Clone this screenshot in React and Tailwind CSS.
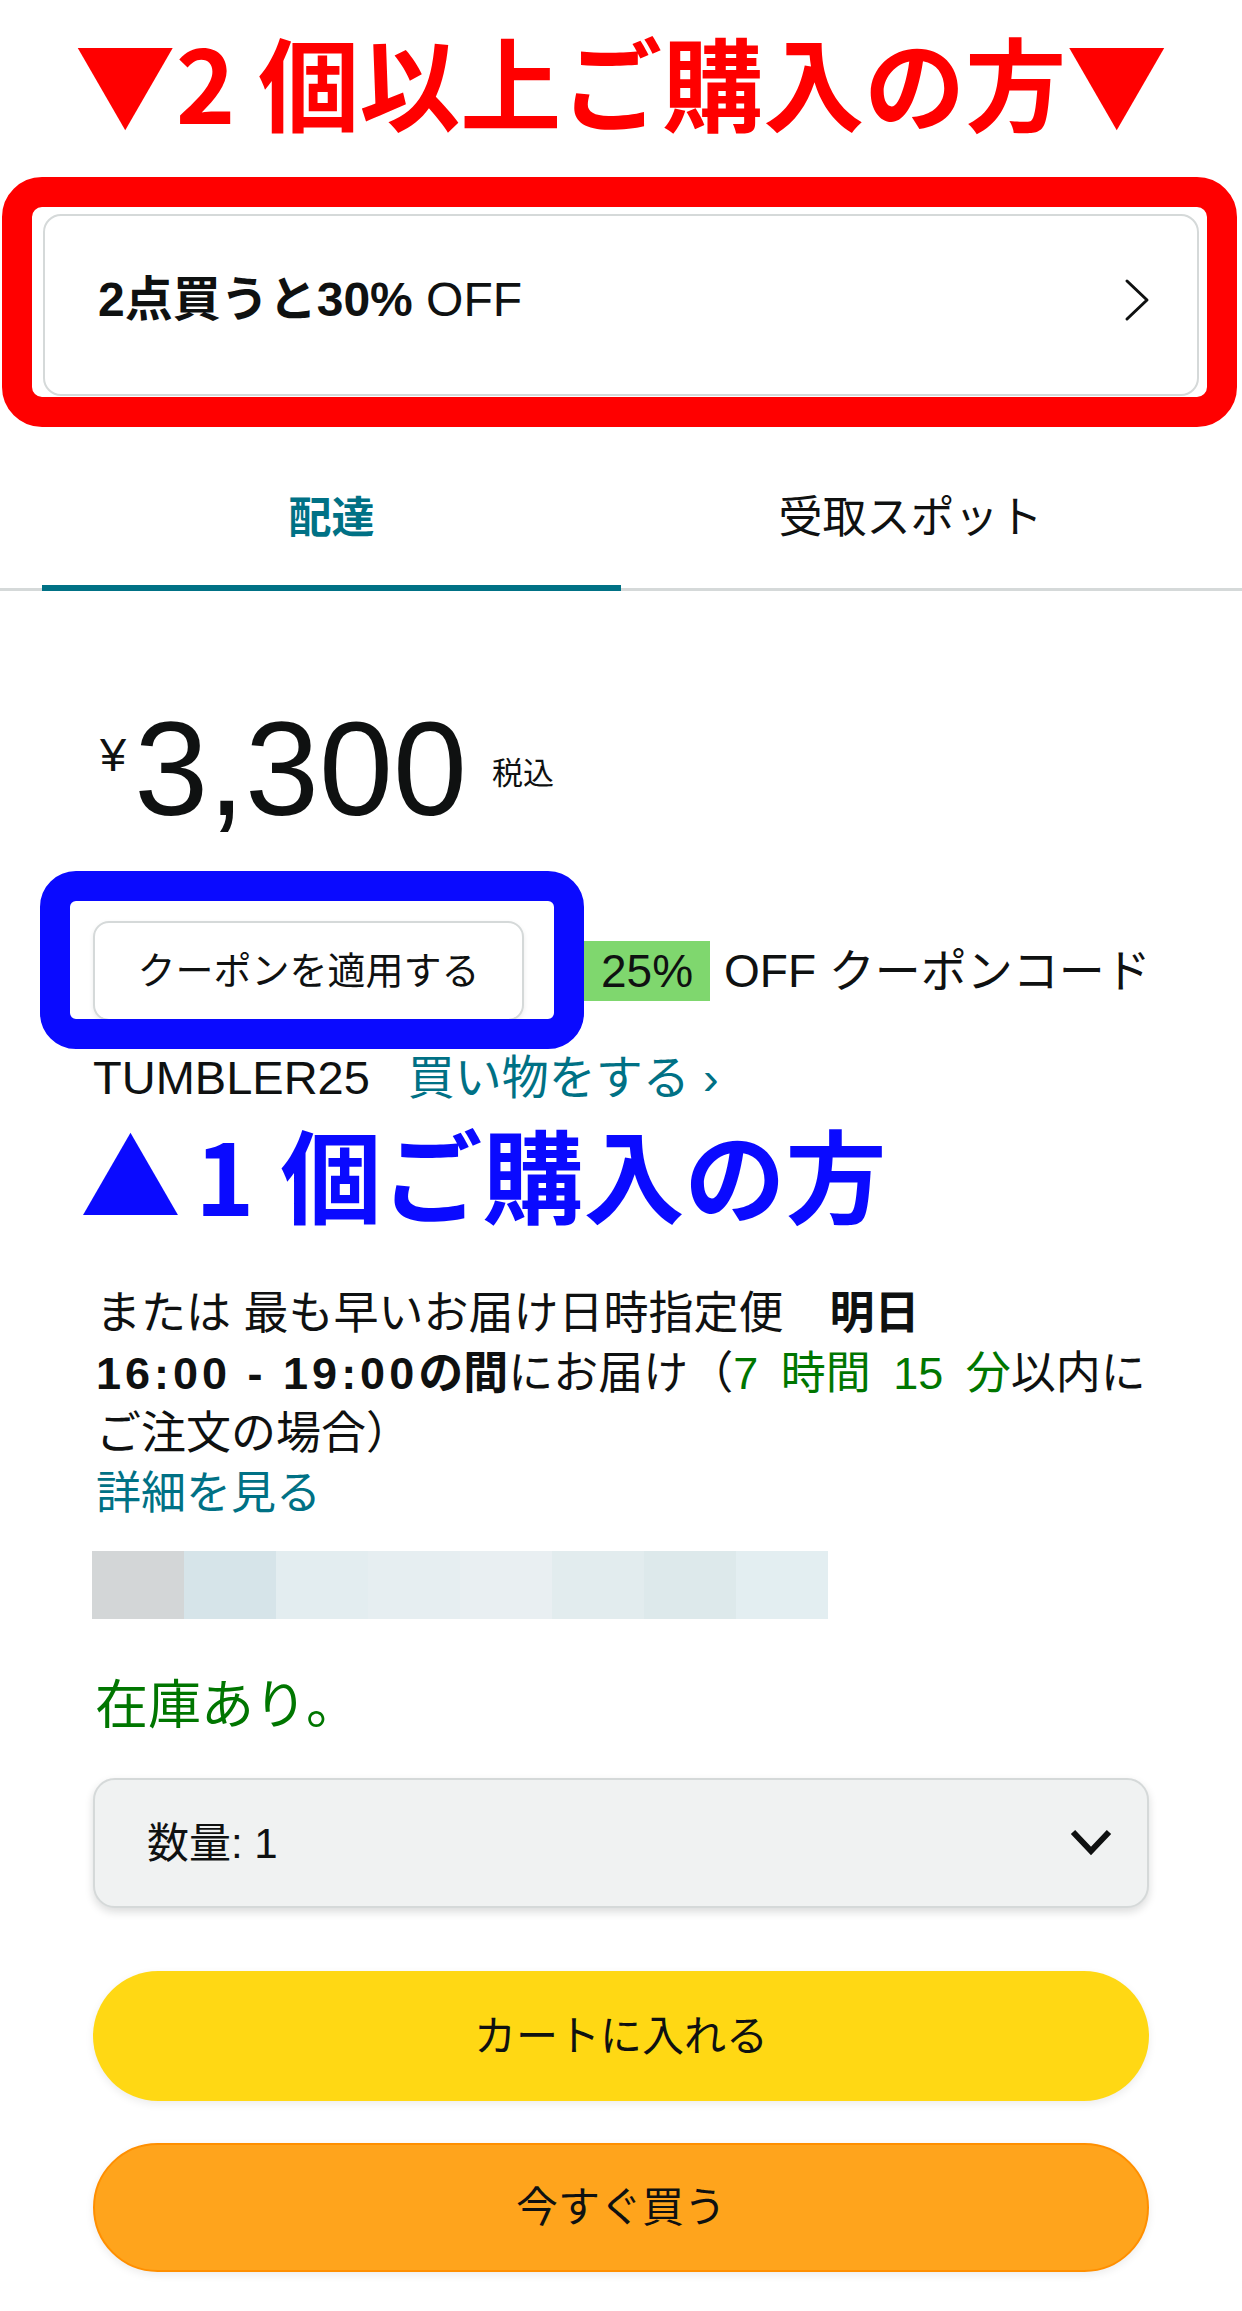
const blurBlocks = ['#d3d6d7', '#d6e4e9', '#e3edf0', '#e6eef1', '#e9eff2', '#e2ecee', '#dde9eb', '#e3eef1'];

const App = () => {
  return (
    <div className="w-[1242px] min-h-[2311px] bg-white text-[#0f1111] font-['Liberation_Sans','Noto_Sans_CJK_JP',sans-serif]">
      {/* annotation: 2個以上 */}
      <div className="h-[177px] pt-[30px] text-center text-[101px] leading-[101px] font-bold text-[#ff0000] font-['Noto_Sans_CJK_JP',sans-serif] whitespace-nowrap">
        ▼2 個以上ご購入の方▼
      </div>

      <div className="ml-[2px] w-[1235px] h-[250px] rounded-[40px] border-[30px] border-[#ff0000] pl-[11px] pr-[8px] pt-[7px] pb-[1px]">
        <div className="h-[182px] rounded-[18px] border-2 border-[#d5d9d9] bg-white flex items-center justify-between pl-[53px] pr-[47px] pb-[10px]">
          <div className="text-[48px] leading-[60px]">
            <span className="font-bold">2点買うと30%</span> OFF
          </div>
          <svg width="26" height="44" viewBox="0 0 26 44" fill="none">
            <polyline points="3,3 23,22 3,41" stroke="#0f1111" strokeWidth="3" strokeLinecap="round" strokeLinejoin="round" />
          </svg>
        </div>
      </div>

      {/* tabs */}
      <div className="border-b-[3px] border-[#d5d9d9]">
        <div className="flex px-[42px]">
          <div className="flex-1 text-center pt-[61px] pb-[37px] border-b-[6px] border-[#007185] -mb-[3px] text-[43px] leading-[60px] font-bold text-[#007185]">
            配達
          </div>
          <div className="flex-1 text-center pt-[61px] pb-[37px] border-b-[6px] border-transparent -mb-[3px] text-[44px] leading-[60px]">
            受取スポット
          </div>
        </div>
      </div>

      {/* price */}
      <div className="mt-[112px] pl-[100px] flex items-start">
        <span className="text-[47px] leading-none mt-[28px]">¥</span>
        <span className="text-[133px] leading-none ml-[8px]">3,300</span>
        <span className="text-[31px] leading-none mt-[55px] ml-[25px]">税込</span>
      </div>

      {/* coupon */}
      <div className="relative mt-[85px] pl-[93px] flex items-center">
        <button className="w-[431px] h-[100px] rounded-[16px] border-2 border-[#d5d9d9] bg-white text-[38px] shadow-[0_2px_5px_rgba(15,17,17,0.08)]">
          クーポンを適用する
        </button>
        <div className="ml-[60px] flex items-center text-[46px] leading-[60px] whitespace-nowrap">
          <span className="bg-[#7fd76e] px-[17px] h-[60px]">25%</span>
          <span className="ml-[14px]">OFF クーポンコード</span>
        </div>
        <div className="absolute left-[40px] -top-[50px] w-[544px] h-[178px] rounded-[36px] border-[30px] border-[#0a0aff] pointer-events-none" />
      </div>

      <div className="mt-[27px] pl-[93px] text-[47px] leading-[60px] whitespace-nowrap">
        TUMBLER25
        <span className="ml-[38px] text-[#007185]">買い物をする ›</span>
      </div>

      {/* annotation: 1個 */}
      <div className="mt-[12px] pl-[80px] flex items-center text-[101px] leading-[104px] font-bold text-[#0a0aff] font-['Noto_Sans_CJK_JP',sans-serif] whitespace-nowrap">
        <span>▲</span>
        <span className="ml-[14px]">1</span>
        <span className="ml-[26px]">個ご購入の方</span>
      </div>

      {/* delivery */}
      <div className="mt-[60px] pl-[96px] text-[45px] leading-[60px] whitespace-nowrap">
        <div>
          または 最も早いお届け日時指定便<span className="ml-[46px] font-bold">明日</span>
        </div>
        <div>
          <span className="font-bold tracking-[4px]">16:00 - 19:00</span>
          <span className="font-bold">の間</span>にお届け（<span className="text-[#007600] [word-spacing:10px]">7 時間 15 分</span>以内に
        </div>
        <div>ご注文の場合）</div>
        <div className="text-[#007185]">詳細を見る</div>
      </div>

      <div className="mt-[27px] ml-[92px] flex h-[68px]">
        {blurBlocks.map((c, i) => (
          <div key={i} className="w-[92px] h-full" style={{ backgroundColor: c }} />
        ))}
      </div>

      <div className="mt-[57px] pl-[95px] text-[53px] leading-[60px] text-[#007600]">在庫あり。</div>

      {/* quantity */}
      <div className="mt-[42px] mx-[93px] h-[130px] rounded-[22px] border-2 border-[#d5d9d9] bg-[#f0f2f2] shadow-[0_4px_9px_rgba(15,17,17,0.15)] flex items-center justify-between pl-[52px] pr-[34px]">
        <span className="text-[42px]">数量: 1</span>
        <svg width="44" height="36" viewBox="0 0 44 36" fill="none">
          <polyline points="4,7 22,26 40,7" stroke="#0f1111" strokeWidth="6" strokeLinejoin="miter" />
        </svg>
      </div>

      <div className="mt-[63px] mx-[93px] h-[130px] rounded-full bg-[#ffd814] flex items-center justify-center text-[42px] shadow-[0_3px_8px_rgba(15,17,17,0.08)]">
        カートに入れる
      </div>

      <div className="mt-[42px] mx-[93px] h-[129px] rounded-full bg-[#ffa41c] border-2 border-[#ff8f00] flex items-center justify-center text-[42px] shadow-[0_3px_8px_rgba(15,17,17,0.08)]">
        今すぐ買う
      </div>
      <div className="h-[39px]" />
    </div>
  );
};

export default App;
